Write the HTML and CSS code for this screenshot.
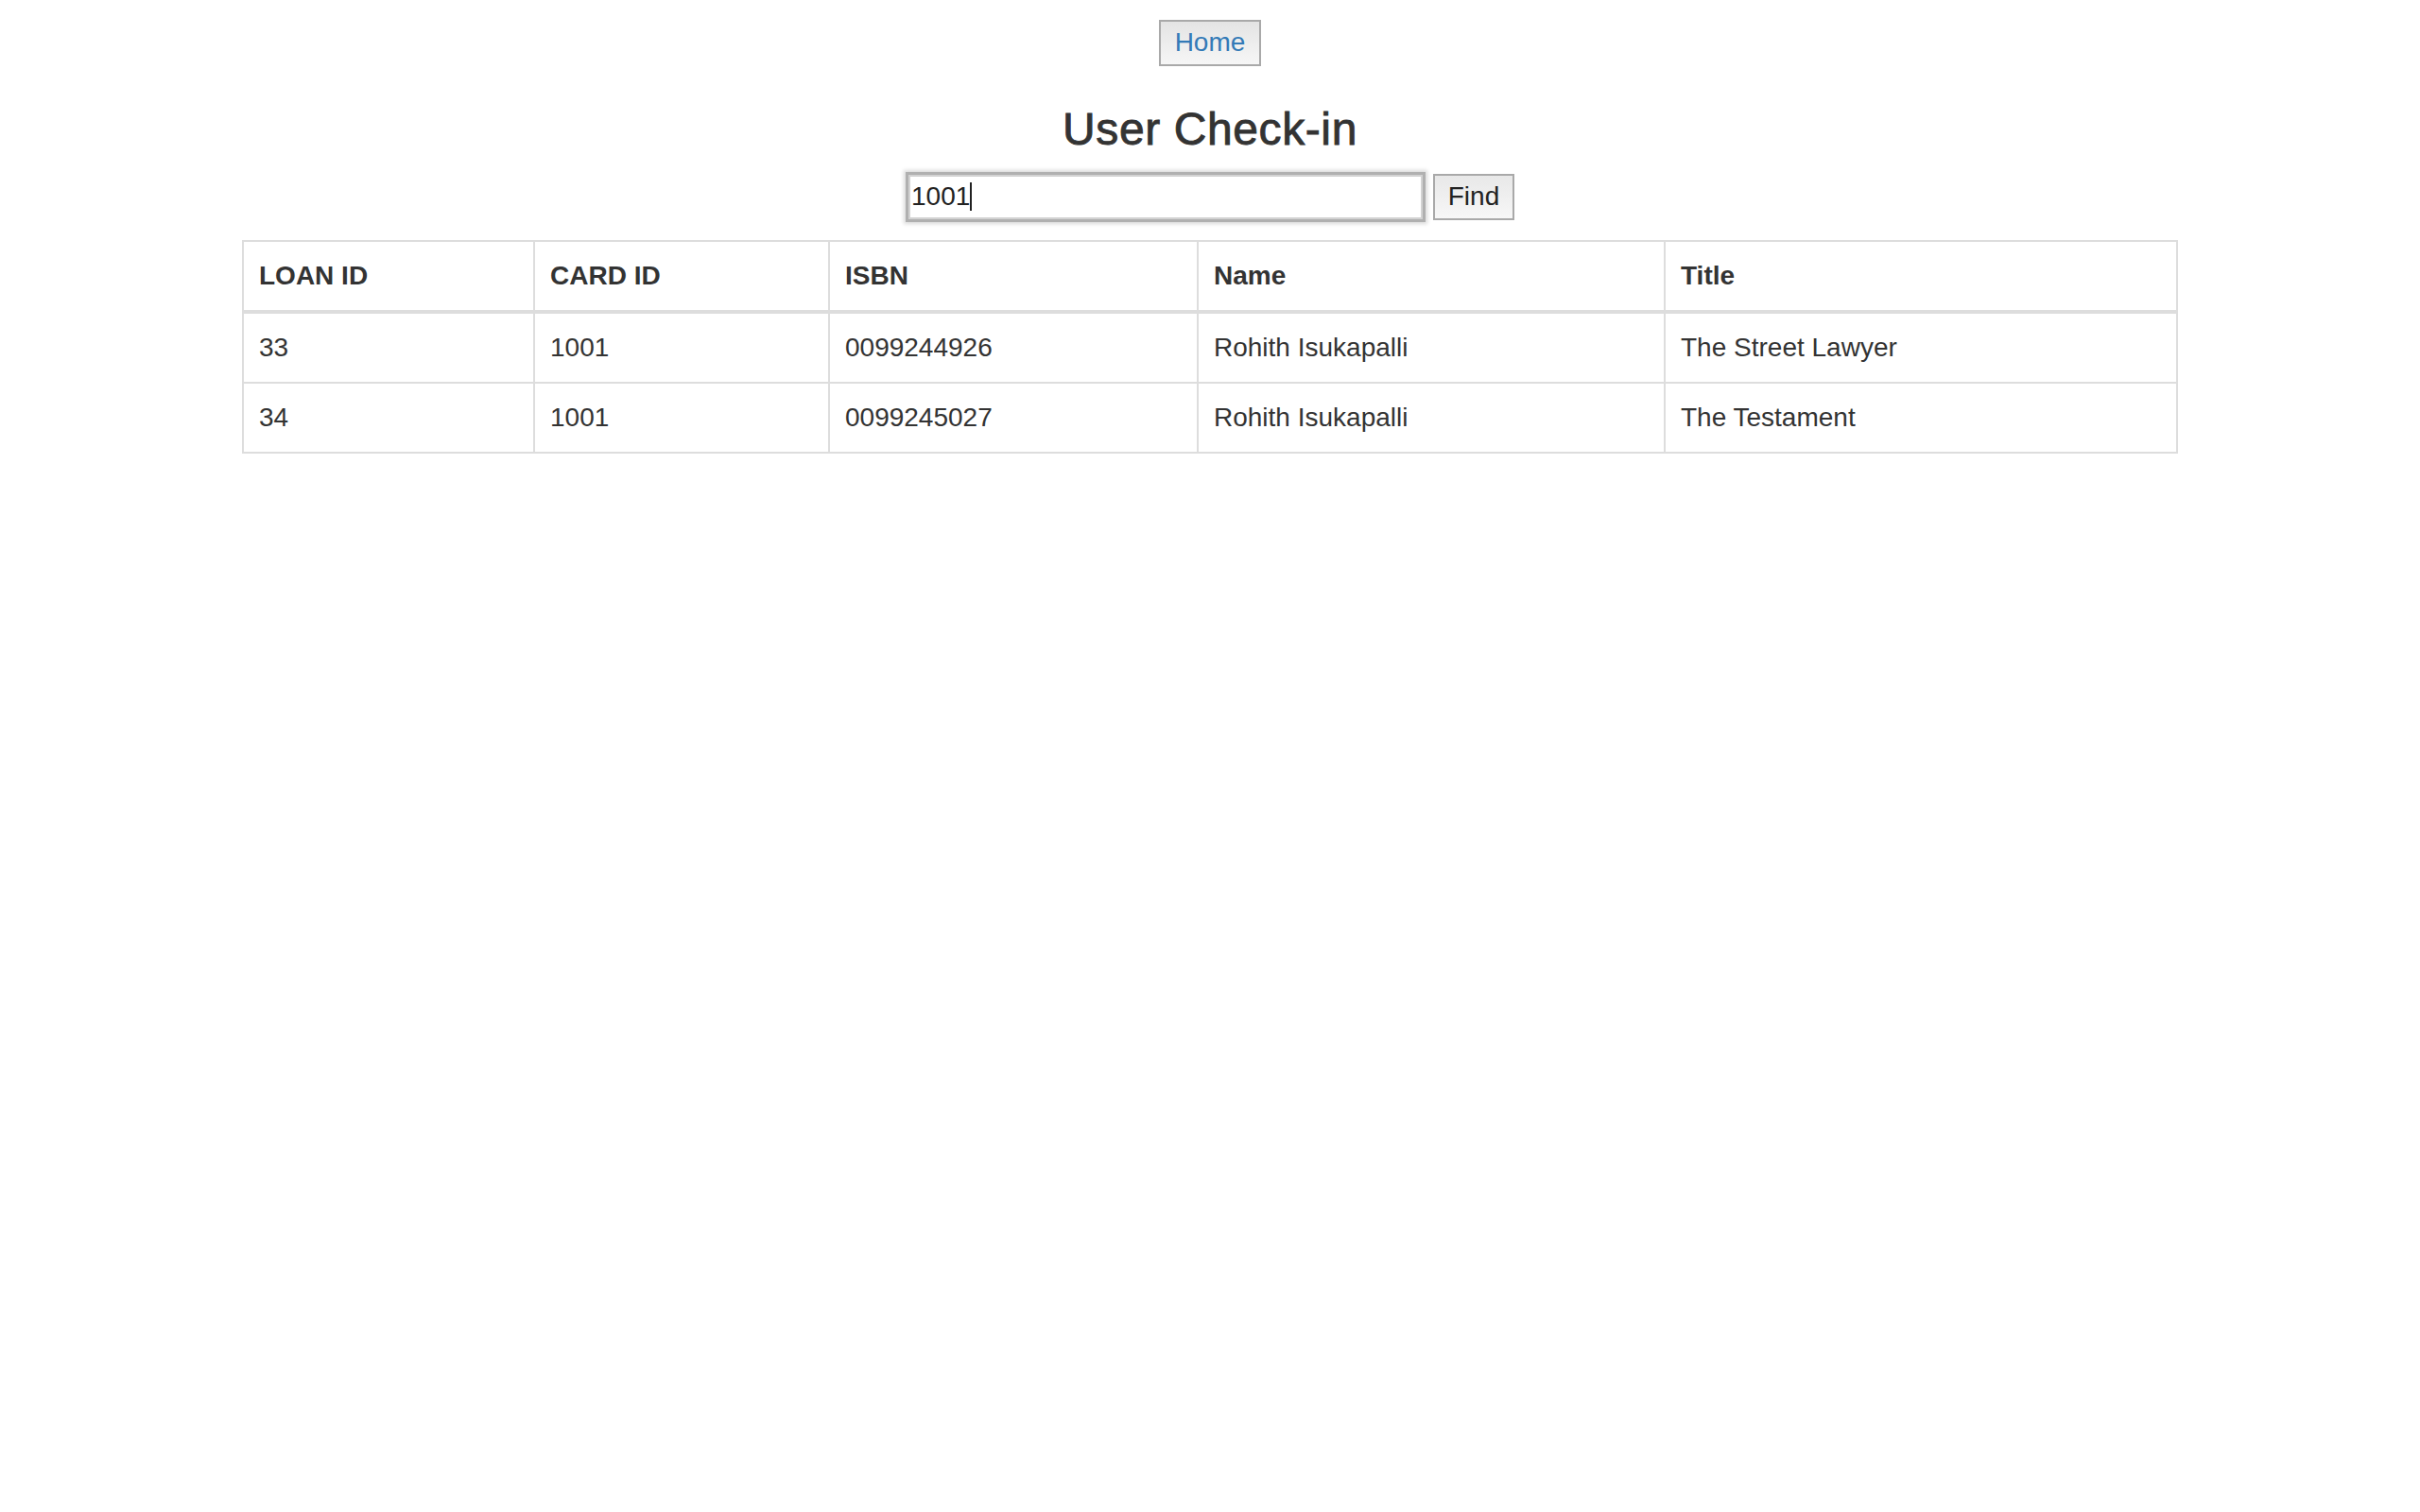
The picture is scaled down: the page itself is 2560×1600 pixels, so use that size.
FILE: index.html
```html
<!DOCTYPE html>
<html lang="en">
<head>
<meta charset="utf-8">
<title>User Check-in</title>
<link rel="stylesheet" href="styles.css">
</head>
<body>
  <nav class="topnav">
    <a class="home-btn" href="#">Home</a>
  </nav>
  <h3 class="page-title">User Check-in</h3>
  <form class="search-row" onsubmit="return false;">
    <span class="field">
      <input class="search-input" type="text" value="1001" aria-label="Card ID">
      <span class="caret"></span>
    </span>
    <button class="find-btn" type="submit">Find</button>
  </form>
  <table class="loans">
    <thead>
      <tr>
        <th class="c-loan">LOAN ID</th>
        <th class="c-card">CARD ID</th>
        <th class="c-isbn">ISBN</th>
        <th class="c-name">Name</th>
        <th class="c-title">Title</th>
      </tr>
    </thead>
    <tbody>
      <tr>
        <td>33</td>
        <td>1001</td>
        <td>0099244926</td>
        <td>Rohith Isukapalli</td>
        <td>The Street Lawyer</td>
      </tr>
      <tr>
        <td>34</td>
        <td>1001</td>
        <td>0099245027</td>
        <td>Rohith Isukapalli</td>
        <td>The Testament</td>
      </tr>
    </tbody>
  </table>
</body>
</html>
```

FILE: styles.css
```css
* {
  box-sizing: border-box;
}

html, body {
  margin: 0;
  padding: 0;
  background: #ffffff;
}

body {
  font-family: "Liberation Sans", Arial, Helvetica, sans-serif;
  font-size: 28px;
  line-height: 40px;
  color: #333333;
}

.topnav {
  display: flex;
  justify-content: center;
  padding-top: 21px;
}

.home-btn {
  display: flex;
  align-items: center;
  justify-content: center;
  width: 108px;
  height: 49px;
  padding-bottom: 2px;
  border: 2px solid #a9a9a9;
  background: linear-gradient(#e4e4e4, #f6f6f6);
  color: #337ab7;
  font-size: 28px;
  text-decoration: none;
}

.page-title {
  margin: 41px 0 19px;
  font-size: 48px;
  line-height: 52.8px;
  font-weight: 400;
  letter-spacing: 0.6px;
  -webkit-text-stroke: 0.9px #333333;
  text-align: center;
  color: #333333;
}

.search-row {
  display: flex;
  justify-content: center;
  align-items: center;
  gap: 11px;
  height: 51px;
  margin: 0 0 20px;
}

.field {
  position: relative;
  display: block;
  margin-left: 3px;
}

.search-input {
  display: block;
  width: 544px;
  height: 47px;
  margin: 0;
  padding: 0 0 0 1px;
  border: 2px solid #d2d2d2;
  outline: none;
  background: #ffffff;
  font-family: "Liberation Sans", Arial, Helvetica, sans-serif;
  font-size: 28px;
  color: #222222;
  box-shadow: 0 0 0 3px #b0b0b0, 0 0 4px 5px #dadada;
}

.caret {
  position: absolute;
  left: 65px;
  top: 8px;
  width: 2px;
  height: 30px;
  background: #222222;
}

.find-btn {
  width: 86px;
  height: 49px;
  margin: 0;
  padding: 0;
  border: 2px solid #a9a9a9;
  background: linear-gradient(#e8e8e8, #f7f7f7);
  font-family: "Liberation Sans", Arial, Helvetica, sans-serif;
  font-size: 28px;
  color: #222222;
}

.loans {
  width: 2048px;
  margin: 0 auto;
  table-layout: fixed;
  border-collapse: separate;
  border-spacing: 0;
  border-top: 2px solid #dddddd;
  border-left: 2px solid #dddddd;
}

.loans th,
.loans td {
  padding: 16px;
  text-align: left;
  vertical-align: middle;
  border-right: 2px solid #dddddd;
  border-bottom: 2px solid #dddddd;
  line-height: 40px;
  font-size: 28px;
  color: #333333;
  white-space: nowrap;
}

.loans th {
  font-weight: 700;
  vertical-align: bottom;
  border-bottom-width: 4px;
}

.c-loan { width: 308px; }
.c-card { width: 312px; }
.c-isbn { width: 390px; }
.c-name { width: 494px; }
.c-title { width: 542px; }
```
